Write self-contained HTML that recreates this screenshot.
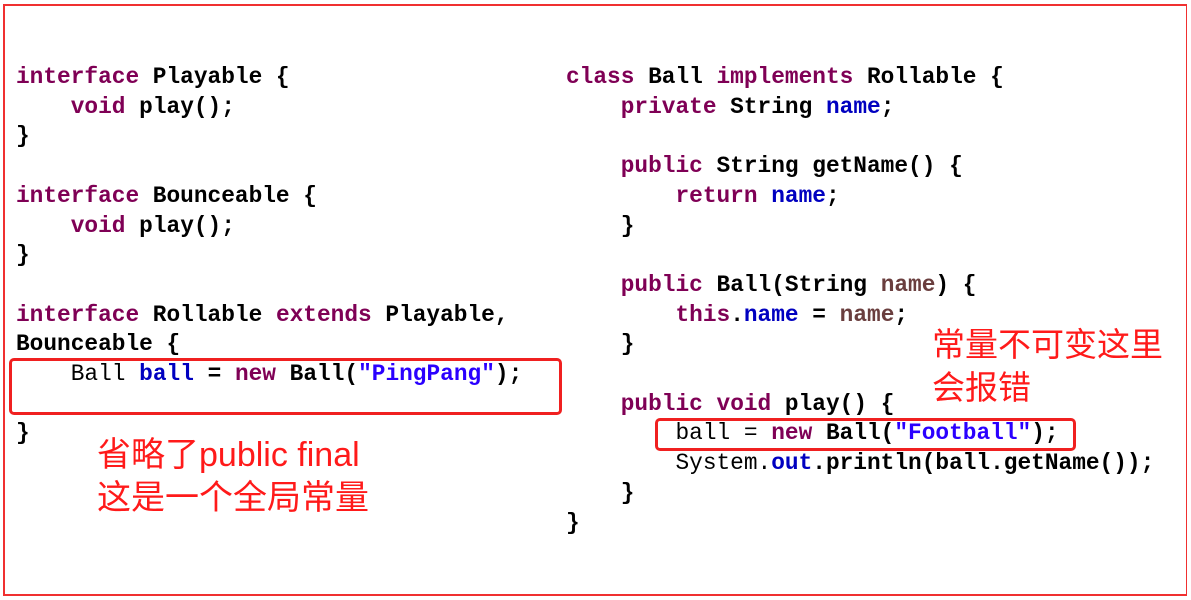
<!DOCTYPE html>
<html><head><meta charset="utf-8"><style>
html,body{margin:0;padding:0;background:#fff;width:1191px;height:600px;overflow:hidden;position:relative}
.frame{position:absolute;left:3px;top:4px;width:1184px;height:592px;border:2px solid #f03030;border-right-width:1px;box-sizing:border-box}
pre{position:absolute;margin:0;font-family:"Liberation Mono",monospace;font-size:22.8px;line-height:29.7px;font-weight:bold;color:#000}
.k{color:#7F0055}.f{color:#0000C0}.s{color:#2A00FF}.p{color:#6A3E3E}.n{font-weight:normal}
.box{position:absolute;border:3px solid #f02020;border-radius:5px;box-sizing:border-box}
.cn{position:absolute;color:#ff1a1a;font-family:"Liberation Sans","Noto Sans CJK SC",sans-serif;font-size:34px;line-height:42px;white-space:nowrap}
</style></head><body>
<div class="frame"></div>
<pre style="left:16px;top:63px"><span class="k">interface</span> Playable {
    <span class="k">void</span> play();
}

<span class="k">interface</span> Bounceable {
    <span class="k">void</span> play();
}

<span class="k">interface</span> Rollable <span class="k">extends</span> Playable,
Bounceable {
    <span class="n">Ball</span> <span class="f">ball</span> = <span class="k">new</span> Ball(<span class="s">"PingPang"</span>);

}</pre>
<pre style="left:566px;top:63px"><span class="k">class</span> Ball <span class="k">implements</span> Rollable {
    <span class="k">private</span> String <span class="f">name</span>;

    <span class="k">public</span> String getName() {
        <span class="k">return</span> <span class="f">name</span>;
    }

    <span class="k">public</span> Ball(String <span class="p">name</span>) {
        <span class="k">this</span>.<span class="f">name</span> = <span class="p">name</span>;
    }

    <span class="k">public</span> <span class="k">void</span> play() {
        <span class="n">ball =</span> <span class="k">new</span> Ball(<span class="s">"Football"</span>);
        <span class="n">System.</span><span class="f">out</span>.println(ball.getName());
    }
}</pre>
<div class="box" style="left:9px;top:358px;width:553px;height:57px"></div>
<div class="box" style="left:655px;top:418px;width:421px;height:33px"></div>
<div class="cn" style="left:97px;top:434px">省略了public final</div>
<div class="cn" style="left:97px;top:477px">这是一个全局常量</div>
<div class="cn" style="left:932px;top:324px;font-size:33px">常量不可变这里</div>
<div class="cn" style="left:932px;top:367px;font-size:33px">会报错</div>
</body></html>
